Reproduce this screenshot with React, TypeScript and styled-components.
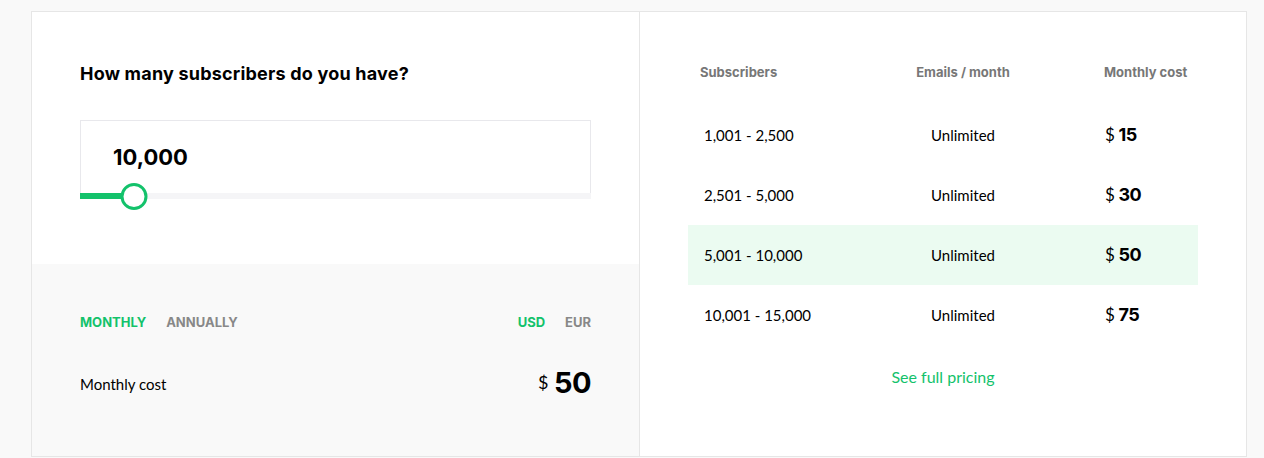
import styled, { createGlobalStyle } from 'styled-components';

const GlobalStyle = createGlobalStyle`
    body {
        margin: 0;
        background: #f9f9f9;
        font-family: Lato, "Open Sans", sans-serif;
        color: #000;
    }
`;

const green = '#13c26b';
const boldFont = 'Inter, "Open Sans", sans-serif';

// Page Styling Component
const Page = styled.div`
    padding: 11px 17px 0 31px;
`;

// Card Styling Component
const Card = styled.div`
    display: flex;
    background: #fff;
    border: 1px solid #e6e6e6;
    height: 444px;
`;

// Left Side Styling Components
const Calculator = styled.div`
    width: 607px;
    display: flex;
    flex-direction: column;
    border-right: 1px solid #e6e6e6;
`;

const Top = styled.div`
    height: 252px;
    padding: 50px 48px 0;
    box-sizing: border-box;
`;

const Question = styled.h2`
    margin: 0;
    font-family: ${boldFont};
    font-size: 18px;
    font-weight: 700;
    line-height: 24px;
    letter-spacing: 0.2px;
`;

const InputBox = styled.div`
    margin-top: 34px;
    height: 73px;
    border: 1px solid #e8e8ec;
    border-bottom: none;
    box-sizing: border-box;
    padding: 0 32px;
    display: flex;
    align-items: center;
    font-family: ${boldFont};
    font-size: 22px;
    font-weight: 700;
`;

const Track = styled.div`
    position: relative;
    height: 6px;
    background: #f5f5f7;
`;

const Fill = styled.div`
    height: 100%;
    background: ${green};
`;

const Thumb = styled.div`
    position: absolute;
    top: -10px;
    width: 27px;
    height: 27px;
    box-sizing: border-box;
    border: 3px solid ${green};
    border-radius: 50%;
    background: #fff;
    transform: translateX(-50%);
`;

const Bottom = styled.div`
    flex: 1;
    background: #f9f9f9;
    padding: 50px 48px 0;
`;

const Toggles = styled.div`
    display: flex;
    justify-content: space-between;
`;

const ToggleGroup = styled.div`
    display: flex;
    gap: 20px;
`;

const Toggle = styled.span<{ $active?: boolean }>`
    font-family: ${boldFont};
    font-size: 13px;
    font-weight: 700;
    line-height: 16px;
    color: ${(p) => (p.$active ? green : '#888')};
`;

const CostRow = styled.div`
    margin-top: 38px;
    display: flex;
    justify-content: space-between;
    align-items: flex-start;
`;

const CostLabel = styled.span`
    font-size: 15px;
    line-height: 20px;
    margin-top: 6px;
`;

const Price = styled.span<{ $big?: boolean }>`
    display: inline-flex;
    align-items: baseline;
    gap: ${(p) => (p.$big ? '6px' : '4px')};
    font-family: ${boldFont};
    font-size: ${(p) => (p.$big ? '29px' : '18px')};
    font-weight: 700;
    line-height: 1;
    letter-spacing: -0.5px;
`;

const Currency = styled.span<{ $big?: boolean }>`
    font-family: Lato, sans-serif;
    font-size: ${(p) => (p.$big ? '18px' : '17px')};
    font-weight: 400;
    position: relative;
    top: ${(p) => (p.$big ? '-4px' : '0')};
`;

// Right Side Styling Components
const Pricing = styled.div`
    flex: 1;
    padding: 48px 48px 0;
`;

const Grid = styled.div`
    display: grid;
    grid-template-columns: 190px 170px 150px;
`;

const Head = styled.div<{ $align?: string }>`
    font-family: ${boldFont};
    font-size: 13px;
    font-weight: 700;
    color: #777;
    line-height: 24px;
    padding-left: ${(p) => (p.$align === 'left' ? '12px' : p.$align === 'price' ? '56px' : '0')};
    text-align: ${(p) => (p.$align === 'center' ? 'center' : 'left')};
    margin-bottom: 21px;
`;

const Cell = styled.div<{ $align?: string; $highlight?: boolean }>`
    height: 60px;
    display: flex;
    align-items: center;
    justify-content: ${(p) => (p.$align === 'center' ? 'center' : 'flex-start')};
    padding-left: ${(p) => (p.$align === 'left' ? '16px' : p.$align === 'price' ? '57px' : '0')};
    font-size: 15px;
    background: ${(p) => (p.$highlight ? '#ebfbf1' : 'transparent')};
`;

const FullPricing = styled.a`
    display: block;
    margin-top: 22px;
    text-align: center;
    color: ${green};
    font-size: 16px;
    line-height: 20px;
    text-decoration: none;
`;

const tiers = [
    { range: '1,001 - 2,500', cost: 15 },
    { range: '2,501 - 5,000', cost: 30 },
    { range: '5,001 - 10,000', cost: 50 },
    { range: '10,001 - 15,000', cost: 75 },
];

const App = () => {
    const subscribers = 10000;
    const progress = 54;

    return (
        <Page>
            <GlobalStyle />
            <Card>
                <Calculator>
                    <Top>
                        <Question>How many subscribers do you have?</Question>
                        <InputBox>{subscribers.toLocaleString('en-US')}</InputBox>
                        <Track>
                            <Fill style={{ width: `${progress - 13}px` }} />
                            <Thumb style={{ left: `${progress}px` }} />
                        </Track>
                    </Top>
                    <Bottom>
                        <Toggles>
                            <ToggleGroup>
                                <Toggle $active>MONTHLY</Toggle>
                                <Toggle>ANNUALLY</Toggle>
                            </ToggleGroup>
                            <ToggleGroup>
                                <Toggle $active>USD</Toggle>
                                <Toggle>EUR</Toggle>
                            </ToggleGroup>
                        </Toggles>
                        <CostRow>
                            <CostLabel>Monthly cost</CostLabel>
                            <Price $big>
                                <Currency $big>$</Currency>50
                            </Price>
                        </CostRow>
                    </Bottom>
                </Calculator>
                <Pricing>
                    <Grid>
                        <Head $align="left">Subscribers</Head>
                        <Head $align="center">Emails / month</Head>
                        <Head $align="price">Monthly cost</Head>
                        {tiers.map((t) => {
                            const hl = t.cost === 50;
                            return [
                                <Cell key={t.range + 'r'} $align="left" $highlight={hl}>{t.range}</Cell>,
                                <Cell key={t.range + 'e'} $align="center" $highlight={hl}>Unlimited</Cell>,
                                <Cell key={t.range + 'c'} $align="price" $highlight={hl}>
                                    <Price>
                                        <Currency>$</Currency>
                                        {t.cost}
                                    </Price>
                                </Cell>,
                            ];
                        })}
                    </Grid>
                    <FullPricing href="#">See full pricing</FullPricing>
                </Pricing>
            </Card>
        </Page>
    );
};

export default App;
